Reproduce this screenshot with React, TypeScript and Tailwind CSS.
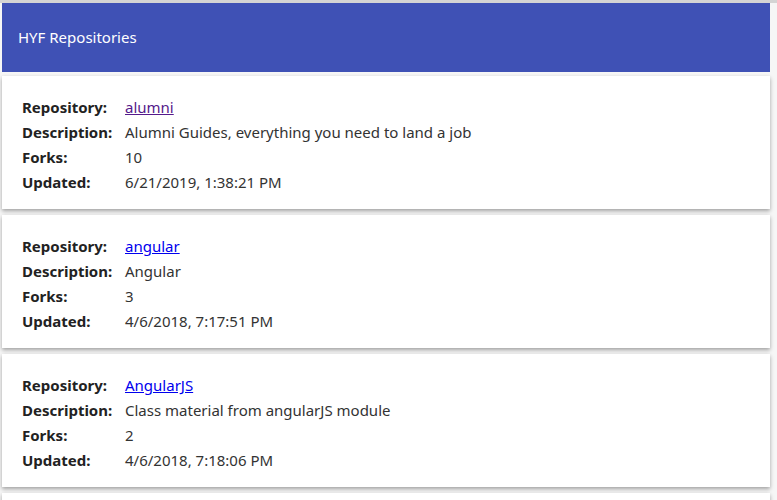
const repos = [
  {
    name: 'alumni',
    description: 'Alumni Guides, everything you need to land a job',
    forks: 10,
    updated: '6/21/2019, 1:38:21 PM',
    visited: true,
  },
  {
    name: 'angular',
    description: 'Angular',
    forks: 3,
    updated: '4/6/2018, 7:17:51 PM',
    visited: false,
  },
  {
    name: 'AngularJS',
    description: 'Class material from angularJS module',
    forks: 2,
    updated: '4/6/2018, 7:18:06 PM',
    visited: false,
  },
];

type Repo = (typeof repos)[number];

function Row({ label, children }: { label: string; children: React.ReactNode }) {
  return (
    <div className="flex h-[25px] items-center">
      <div className="w-[103px] shrink-0 font-bold text-[#222]">{label}</div>
      <div className="text-[#333]">{children}</div>
    </div>
  );
}

function RepoCard({ repo }: { repo: Repo }) {
  return (
    <div className="bg-white pl-5 pt-[19px] pb-[14px] shadow-[0_2px_4px_rgba(0,0,0,0.35)]">
      <Row label="Repository:">
        <a
          href="#"
          className={`underline ${repo.visited ? 'text-[#551a8b]' : 'text-[#0000ee]'}`}
        >
          {repo.name}
        </a>
      </Row>
      <Row label="Description:">{repo.description}</Row>
      <Row label="Forks:">{repo.forks}</Row>
      <Row label="Updated:">{repo.updated}</Row>
    </div>
  );
}

export default function App() {
  return (
    <div
      className="h-[500px] overflow-hidden border-t-[3px] border-[#d4d4d4] bg-[#f6f6f6] pl-[2px] pr-[7px] text-[15px]"
      style={{ fontFamily: '"Noto Sans", "Open Sans", sans-serif' }}
    >
      <header className="flex h-[69px] items-center bg-[#3f51b5] px-4 text-[15px] text-white">
        HYF Repositories
      </header>
      <main className="mt-[4px] flex flex-col gap-[6px]">
        {repos.map((repo) => (
          <RepoCard key={repo.name} repo={repo} />
        ))}
        {/* next card, only its top edge is in view */}
        <div className="h-[40px] bg-white shadow-[0_2px_4px_rgba(0,0,0,0.35)]" />
      </main>
    </div>
  );
}
